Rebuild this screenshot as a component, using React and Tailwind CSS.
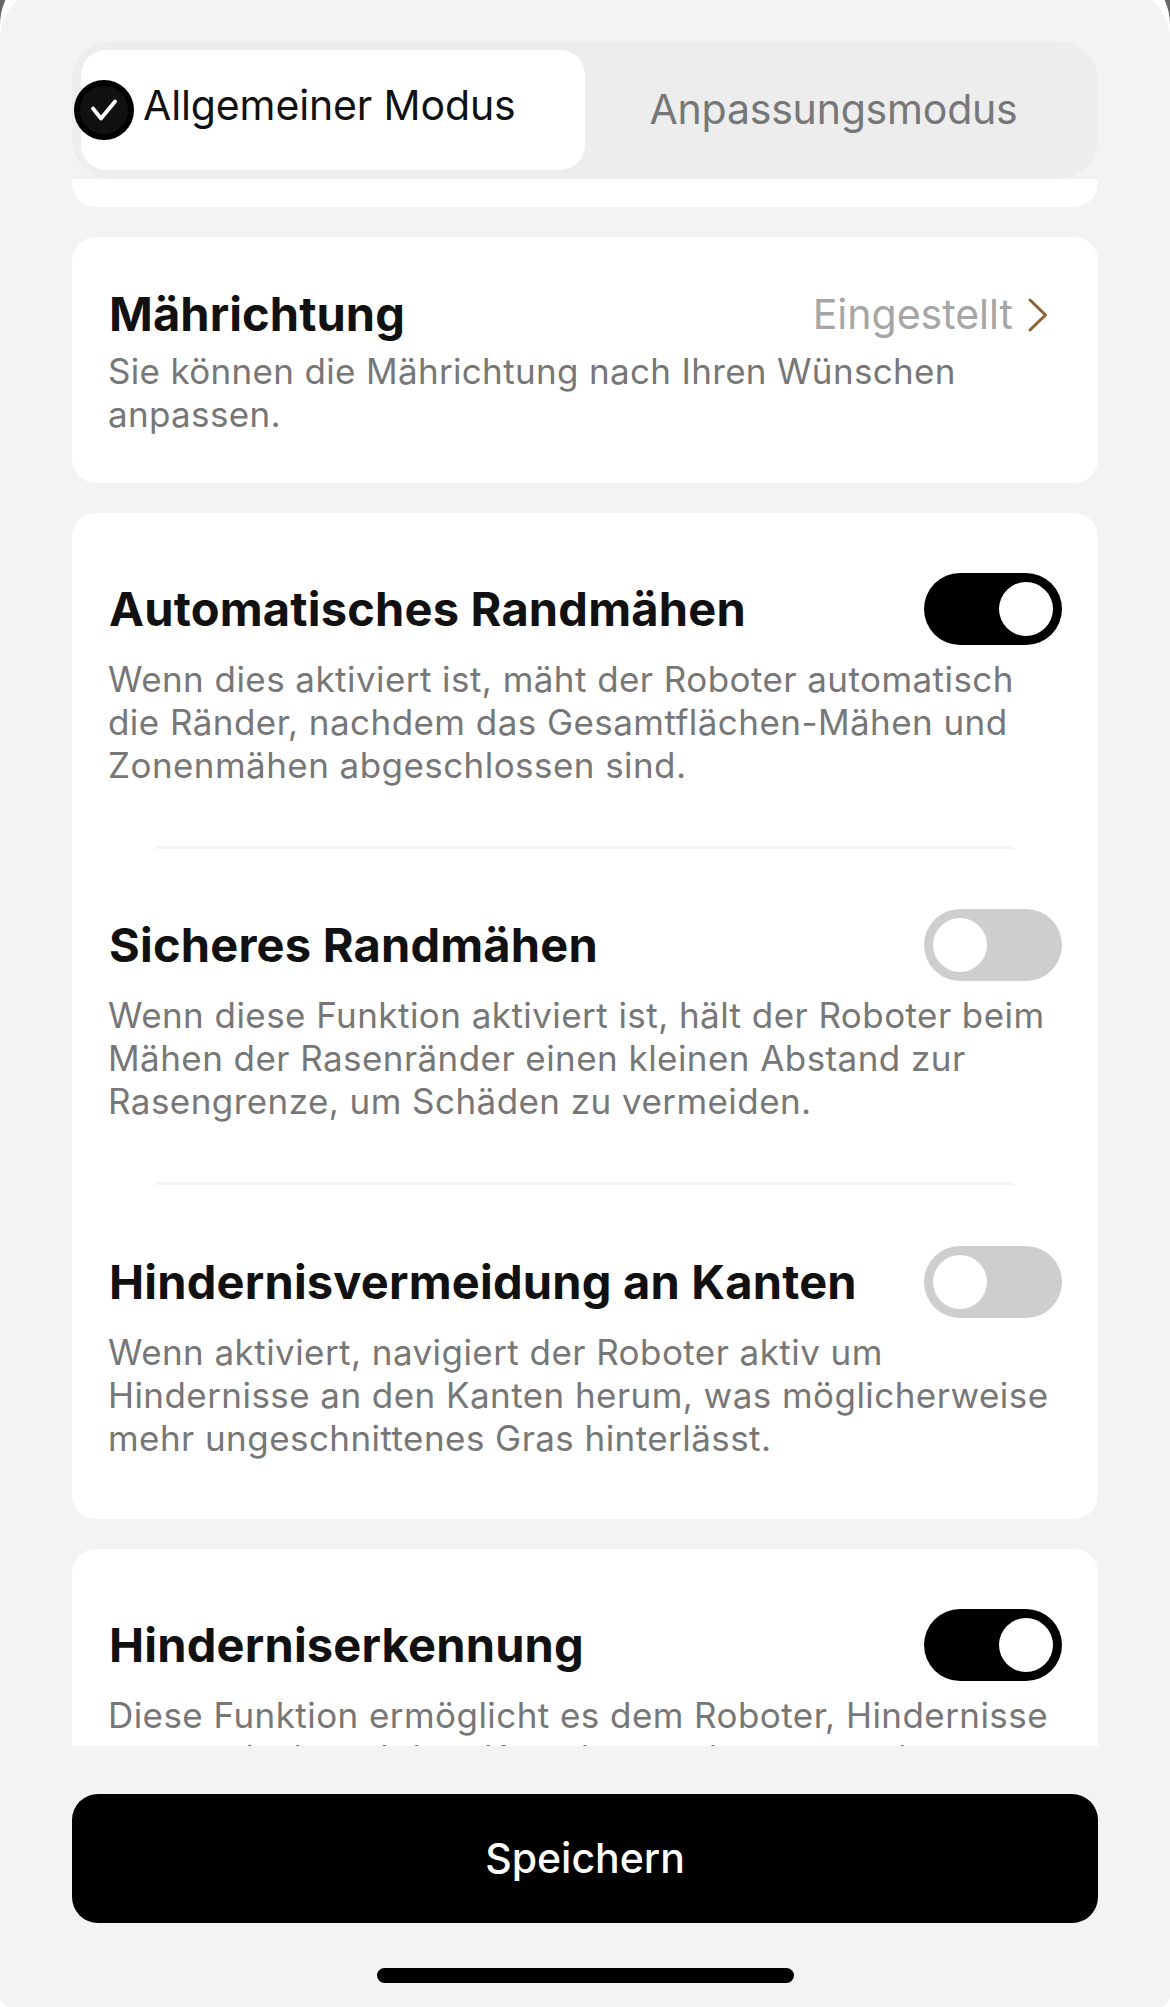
function Toggle({ on }) {
  return (
    <button
      type="button"
      role="switch"
      aria-checked={on}
      className={`flex h-[72px] w-[138px] shrink-0 items-center rounded-full px-[9px] ${on ? "justify-end bg-black" : "justify-start bg-[#cecece]"}`}
    >
      <span className="size-[54px] rounded-full bg-white" />
    </button>
  );
}

function Setting({ title, lines, on }) {
  return (
    <section className="px-9 pt-[60px]">
      <div className="flex h-[72px] items-center justify-between">
        <h2 className="ml-px whitespace-nowrap text-[47px] font-bold leading-[60px] tracking-[0.2px] text-[#111]">
          {title}
        </h2>
        <Toggle on={on} />
      </div>
      <p className="mt-[13px] whitespace-nowrap text-[35px] leading-[43px] tracking-[0.44px] text-[#777]">
        {lines.map((line) => (
          <span key={line} className="block">
            {line}
          </span>
        ))}
      </p>
    </section>
  );
}

function Divider() {
  return <div className="mx-[84px] mt-[59px] h-[3px] bg-[#f4f4f4]" />;
}

function App() {
  return (
    <div className="flex h-[2007px] w-[1170px] flex-col justify-end overflow-hidden bg-[#666] font-['Inter',sans-serif]">
      <div className="h-[2042px] shrink-0 rounded-t-[60px] bg-white pt-5">
        <div className="flex h-full flex-col rounded-t-[55px] rounded-b-[12px] bg-[#f3f3f3] px-[72px] pt-14">
          <div className="flex h-[138px] shrink-0 rounded-[40px] bg-[#ededed] p-[9px]">
            <div className="flex w-[504px] items-center rounded-[25px] bg-white">
              <span className="-ml-[7px] flex size-[60px] items-center justify-center rounded-full border-[6px] border-black bg-[#111]">
                <svg viewBox="0 0 48 48" className="size-12" fill="none">
                  <path
                    d="M13 22.5 L21 32.5 L35 15.5"
                    stroke="white"
                    strokeWidth="3.8"
                    strokeLinecap="round"
                    strokeLinejoin="round"
                  />
                </svg>
              </span>
              <span className="mb-2 ml-[9px] whitespace-nowrap text-[41px] tracking-[-0.12px] text-[#111]">
                Allgemeiner Modus
              </span>
            </div>
            <div className="flex flex-1 items-center justify-center pr-[7px] text-[41px] tracking-[-0.2px] text-[#777]">
              Anpassungsmodus
            </div>
          </div>

          <main className="flex h-[1567px] shrink-0 flex-col gap-[30px] overflow-hidden">
            <div className="h-7 shrink-0 rounded-b-[24px] bg-white" />

            <div className="h-[246px] shrink-0 rounded-[24px] bg-white px-9 pt-[47px]">
              <div className="flex h-[60px] items-center justify-between">
                <h2 className="ml-px text-[47px] font-bold leading-[60px] tracking-[0.1px] text-[#111]">
                  Mährichtung
                </h2>
                <div className="flex items-center pr-[13px] pt-0.5 text-[41px] text-[#a6a6a6]">
                  Eingestellt
                  <svg
                    viewBox="0 0 22 36"
                    className="ml-3.5 h-9 w-[22px]"
                    fill="none"
                  >
                    <path
                      d="M3 3 L18.5 18 L3 33"
                      stroke="#8c6233"
                      strokeWidth="3"
                      strokeLinecap="round"
                      strokeLinejoin="round"
                    />
                  </svg>
                </div>
              </div>
              <p className="mt-1.5 text-[35px] leading-[43px] tracking-[0.33px] text-[#777]">
                Sie können die Mährichtung nach Ihren Wünschen
                <br />
                anpassen.
              </p>
            </div>

            <div className="h-[1006px] shrink-0 rounded-[24px] bg-white">
              <Setting
                on
                title="Automatisches Randmähen"
                lines={[
                  "Wenn dies aktiviert ist, mäht der Roboter automatisch",
                  "die Ränder, nachdem das Gesamtflächen-Mähen und",
                  "Zonenmähen abgeschlossen sind.",
                ]}
              />
              <Divider />
              <Setting
                title="Sicheres Randmähen"
                lines={[
                  "Wenn diese Funktion aktiviert ist, hält der Roboter beim",
                  "Mähen der Rasenränder einen kleinen Abstand zur",
                  "Rasengrenze, um Schäden zu vermeiden.",
                ]}
              />
              <Divider />
              <div className="pt-px">
                <Setting
                  title="Hindernisvermeidung an Kanten"
                  lines={[
                    "Wenn aktiviert, navigiert der Roboter aktiv um",
                    "Hindernisse an den Kanten herum, was möglicherweise",
                    "mehr ungeschnittenes Gras hinterlässt.",
                  ]}
                />
              </div>
            </div>

            <div className="shrink-0 rounded-t-[24px] bg-white">
              <Setting
                on
                title="Hinderniserkennung"
                lines={[
                  "Diese Funktion ermöglicht es dem Roboter, Hindernisse",
                  "automatisch und dem Kontakt zu erkennen und",
                ]}
              />
            </div>
          </main>

          <button
            type="button"
            className="mt-12 flex h-[129px] shrink-0 items-center justify-center rounded-[26px] bg-black text-[41px] font-medium text-white"
          >
            Speichern
          </button>
          <div className="mx-auto mt-[45px] h-[15px] w-[417px] shrink-0 rounded-full bg-black" />
        </div>
      </div>
    </div>
  );
}

export default App;
